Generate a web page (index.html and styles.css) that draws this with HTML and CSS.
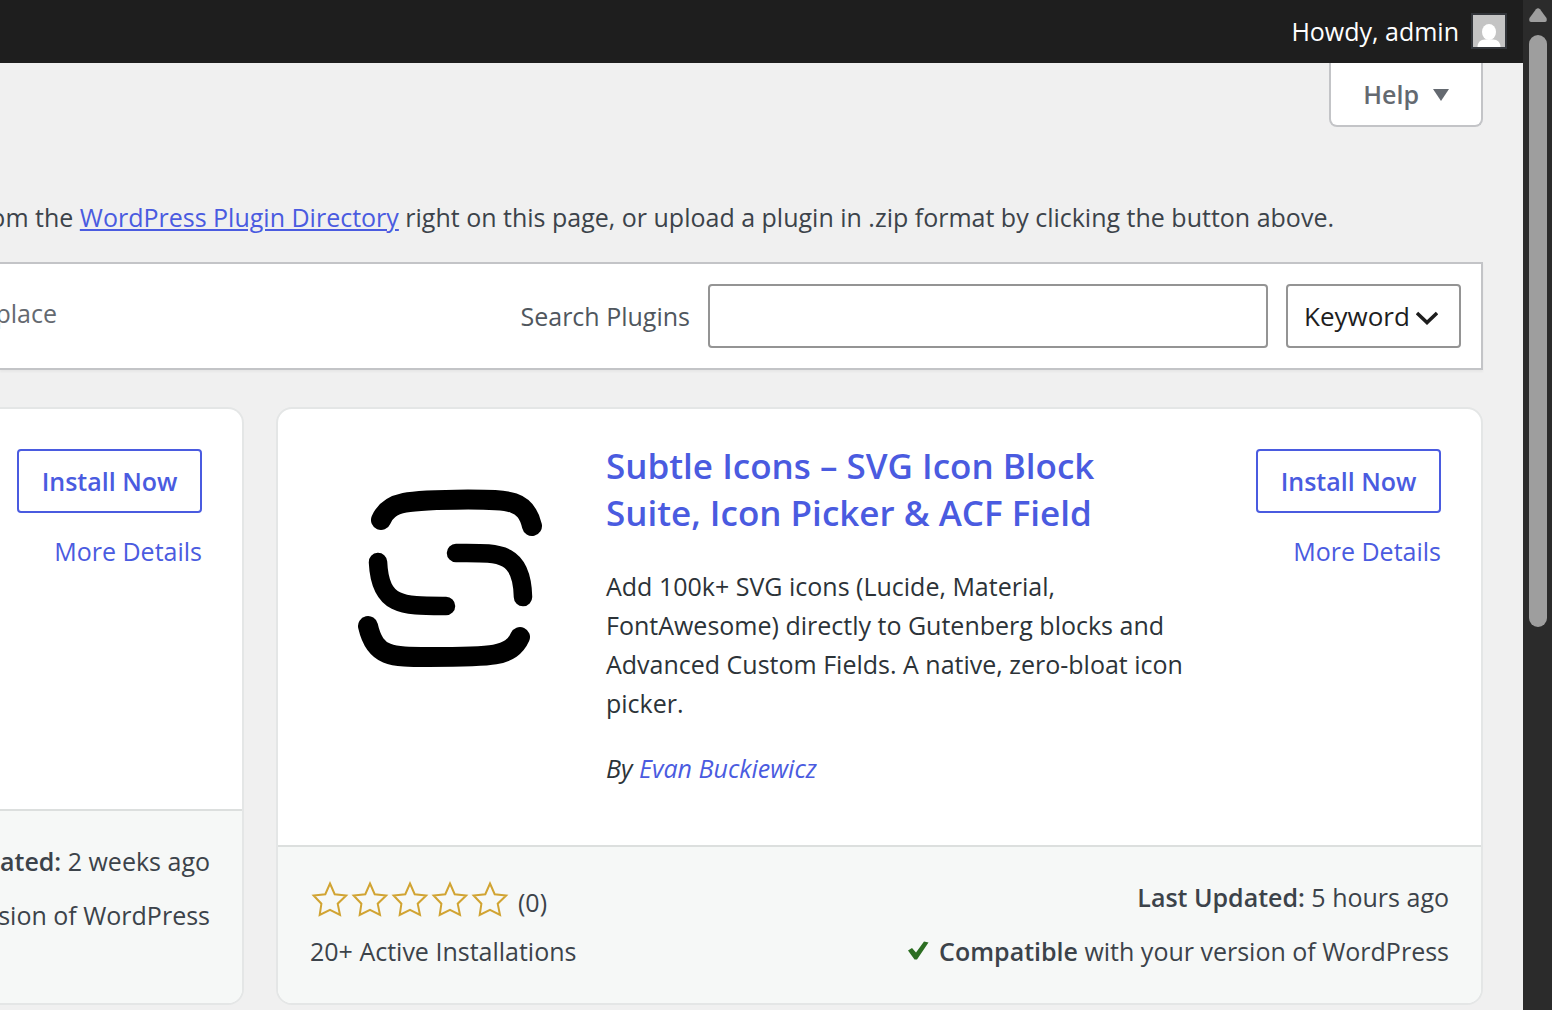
FILE: index.html
```html
<!DOCTYPE html>
<html lang="en">
<head>
    <meta charset="UTF-8">
    <meta name="viewport" content="width=device-width, initial-scale=1.0">
    <title>Add Plugins</title>
    <link rel="stylesheet" href="styles.css">
</head>
<body>
    <div class="page">
        <header class="admin-bar">
            <a href="#" class="account">
                Howdy, admin
                <svg class="avatar" viewBox="0 0 32 32" aria-hidden="true">
                    <rect width="32" height="32" fill="#c4c4c4"/>
                    <ellipse cx="16" cy="17" rx="7" ry="8" fill="#fff"/>
                    <path d="M4.500 32c0-4.500 3-7.500 7.500-7.500h8c4.500 0 7.500 3 7.500 7.500z" fill="#fff"/>
                </svg>
            </a>
        </header>

        <main class="content">
            <div class="screen-links">
                <button type="button" class="help-tab">
                    Help
                    <svg width="16" height="14" viewBox="0 0 16 14" aria-hidden="true"><path d="M0 2h16L8 14z" fill="#646970"/></svg>
                </button>
            </div>

            <p class="intro"><span>from the <a href="#">WordPress Plugin Directory</a> right on this page, or upload a plugin in .zip format by clicking the button above.</span></p>

            <div class="filter-bar">
                <div class="filter-links"><a href="#">Marketplace</a></div>
                <form class="search-form">
                    <label for="search-plugins">Search Plugins</label>
                    <input type="search" id="search-plugins">
                    <select id="search-type" aria-label="Search by">
                        <option>Keyword</option>
                        <option>Author</option>
                        <option>Tag</option>
                    </select>
                    <svg class="select-arrow" width="22" height="14" viewBox="0 0 22 14" aria-hidden="true"><path d="M1 2l10 9.500L21 2" fill="none" stroke="#1e1e1e" stroke-width="3.500"/></svg>
                </form>
            </div>

            <div class="plugin-list">
                <article class="plugin-card card-cut">
                    <div class="card-top">
                        <div class="actions">
                            <button type="button" class="btn">Install Now</button>
                            <a href="#">More Details</a>
                        </div>
                    </div>
                    <div class="card-bottom">
                        <div class="meta-right">
                            <div><strong>Last Updated:</strong> 2 weeks ago</div>
                            <div><strong>Compatible</strong> with your version of WordPress</div>
                        </div>
                    </div>
                </article>

                <article class="plugin-card">
                    <div class="card-top">
                        <svg class="plugin-icon" viewBox="0 0 256 256" fill="none" stroke="#000" stroke-linecap="round" role="img" aria-label="Subtle Icons">
                            <path d="M63 71C71 52 89 51 150 50.500C192 50.500 208 51 214 77" stroke-width="20"/>
                            <path d="M138 104C180 104 204 101 205 148" stroke-width="18.500"/>
                            <path d="M60 113C62 158 85 157 128 157" stroke-width="18.500"/>
                            <path d="M50 177C57 208 73 208 111 208C174 208 193 208 202 188" stroke-width="20"/>
                        </svg>
                        <div class="info">
                            <h3><a href="#">Subtle Icons – SVG Icon Block Suite, Icon Picker &amp; ACF Field</a></h3>
                            <p>Add 100k+ SVG icons (Lucide, Material, FontAwesome) directly to Gutenberg blocks and Advanced Custom Fields. A native, zero-bloat icon picker.</p>
                            <p class="author">By <a href="#">Evan Buckiewicz</a></p>
                        </div>
                        <div class="actions">
                            <button type="button" class="btn">Install Now</button>
                            <a href="#">More Details</a>
                        </div>
                    </div>
                    <div class="card-bottom">
                        <div class="meta-left">
                            <div class="rating">
                                <svg width="200" height="40" viewBox="0 -1 200 40" fill="none" stroke="#d1a433" stroke-width="2" role="img" aria-label="0 stars">
                                    <defs>
                                        <path id="star" d="M20 4.500l4.700 10.700 11.500 1.300-8.500 8.200 2.300 11.300-10-5.200-10.300 5.200 1.700-11.300-7.800-8.200 11.700-1.300z"/>
                                    </defs>
                                    <use href="#star"/>
                                    <use href="#star" x="40"/>
                                    <use href="#star" x="80"/>
                                    <use href="#star" x="120"/>
                                    <use href="#star" x="160"/>
                                </svg>
                                <span>(0)</span>
                            </div>
                            <div>20+ Active Installations</div>
                        </div>
                        <div class="meta-right">
                            <div><strong>Last Updated:</strong> 5 hours ago</div>
                            <div>
                                <svg class="check" width="22" height="20" viewBox="0 0 22 20" aria-hidden="true"><path d="M1 9.500l4-2.500 4 4.500L17 .5l4.500 1L10 18.500H7.500z" fill="#2c6e22"/></svg>
                                <strong>Compatible</strong> with your version of WordPress
                            </div>
                        </div>
                    </div>
                </article>
            </div>
        </main>
    </div>

    <div class="scrollbar" aria-hidden="true">
        <svg width="18" height="14" viewBox="0 0 18 14"><path d="M7 1.200Q9-.8 11 1.200L17.500 10Q18.500 14 16 14H2Q-.5 14 .5 10z" fill="#9e9e9e"/></svg>
        <div class="thumb"></div>
    </div>
</body>
</html>
```
FILE: styles.css
```css
:root {
    --accent: #4a5be0;
    --text: #3c434a;
    --muted: #50575e;
    --border: #c3c4c7;
    --card-border: #e4e6e6;
}

* {
    box-sizing: border-box;
    margin: 0;
    padding: 0;
}

body {
    display: flex;
    height: 100vh;
    overflow: hidden;
    background: #f0f0f0;
    color: var(--text);
    font-family: "Open Sans", "Noto Sans", sans-serif;
    font-size: 25px;
    line-height: 40px;
}

a {
    color: var(--accent);
}

strong {
    font-weight: 600;
}

button,
input,
select {
    font: inherit;
}

.page {
    flex: 1;
    min-width: 0;
}

.admin-bar {
    display: flex;
    justify-content: flex-end;
    align-items: center;
    height: 63px;
    padding: 0 16px 2px 0;
    background: #1e1e1e;
}

.account {
    display: flex;
    align-items: center;
    gap: 12px;
    color: #fff;
    text-decoration: none;
}

.avatar {
    width: 36px;
    height: 36px;
    border: 2px solid #32353a;
}

.content {
    padding-right: 40px;
}

.screen-links {
    display: flex;
    justify-content: flex-end;
}

.help-tab {
    display: flex;
    align-items: center;
    gap: 14px;
    height: 64px;
    padding: 0 32px;
    border: 2px solid var(--border);
    border-top: 0;
    border-radius: 0 0 8px 8px;
    background: #fff;
    color: #646970;
    font-weight: 600;
}

.intro {
    display: flex;
    justify-content: flex-end;
    margin: 70px 0 25px;
    padding-right: 149px;
    overflow: hidden;
    white-space: nowrap;
}

.filter-bar {
    display: flex;
    justify-content: space-between;
    height: 108px;
    padding: 20px 20px 20px 0;
    border: 2px solid var(--border);
    border-left: 0;
    background: #fff;
    box-shadow: 0 2px 2px rgba(0, 0, 0, 0.04);
}

.filter-links {
    display: flex;
    justify-content: flex-end;
    width: 57px;
    padding-top: 9px;
    overflow: hidden;
}

.filter-links a {
    color: #646970;
    text-decoration: none;
}

.search-form {
    position: relative;
    display: flex;
    align-items: center;
    gap: 18px;
    color: var(--muted);
}

.search-form input,
.search-form select {
    height: 64px;
    border: 2px solid #949494;
    border-radius: 4px;
    background: #fff;
}

.search-form input {
    width: 560px;
    padding: 0 16px;
}

.search-form select {
    width: 175px;
    padding: 0 16px;
    appearance: none;
    color: #1e1e1e;
    font-size: 26px;
}

.select-arrow {
    position: absolute;
    top: 27px;
    right: 23px;
    pointer-events: none;
}

.plugin-list {
    display: flex;
    gap: 32px;
    margin-top: 37px;
}

.plugin-card {
    display: flex;
    flex: 1;
    flex-direction: column;
    min-width: 0;
    border: 2px solid var(--card-border);
    border-radius: 16px;
    background: #fff;
    overflow: hidden;
}

/* neighbouring card, only its right side is in view */
.card-cut {
    flex: 0 0 244px;
    border-left: 0;
    border-radius: 0 16px 16px 0;
}

.card-top {
    display: flex;
    gap: 32px;
    min-height: 400px;
    padding: 40px;
}

.card-cut .card-top,
.card-cut .card-bottom {
    justify-content: flex-end;
    padding-left: 0;
}

.plugin-icon {
    flex: none;
    width: 256px;
    height: 256px;
}

.info {
    flex: 1;
    padding-right: 32px;
    color: #2c3338;
    line-height: 39px;
}

.info h3 {
    margin: -7px 0 31px;
    font-size: 35px;
    font-weight: 600;
    line-height: 47px;
}

.info p {
    margin-bottom: 26px;
}

.info .author {
    margin-bottom: 17px;
    font-style: italic;
}

.info a,
.actions a {
    text-decoration: none;
}

.actions {
    display: flex;
    flex-direction: column;
    align-items: flex-end;
    gap: 18px;
}

.btn {
    width: 185px;
    height: 64px;
    border: 2px solid var(--accent);
    border-radius: 4px;
    background: #fff;
    color: var(--accent);
    font-weight: 600;
}

.card-bottom {
    display: flex;
    flex: 1;
    justify-content: space-between;
    padding: 31px 32px 33px;
    border-top: 2px solid #dcdfde;
    background: #f6f8f7;
    line-height: 38px;
    white-space: nowrap;
}

.meta-left,
.meta-right {
    display: flex;
    flex-direction: column;
    gap: 16px;
}

.meta-right {
    align-items: flex-end;
}

.rating {
    display: flex;
    gap: 8px;
    height: 38px;
}

.rating span {
    padding-top: 5px;
}

.check {
    margin-right: 4px;
}

.scrollbar {
    display: flex;
    flex: 0 0 29px;
    flex-direction: column;
    align-items: center;
    gap: 13px;
    padding-top: 8px;
    background: #2b2b2b;
}

.thumb {
    width: 18px;
    height: 592px;
    border-radius: 9px;
    background: #9e9e9e;
}
```
